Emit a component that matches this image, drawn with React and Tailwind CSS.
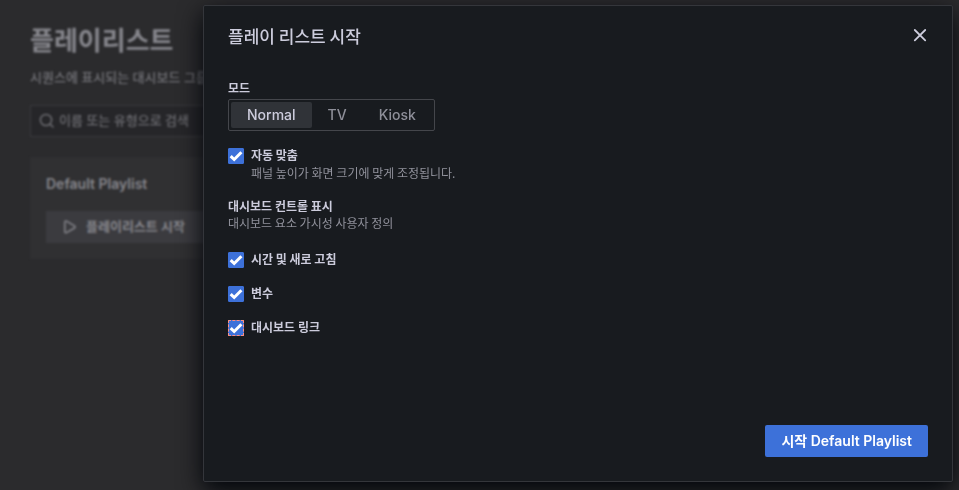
import { useState } from "react";

const modes = ["Normal", "TV", "Kiosk"];

function SearchIcon() {
  return (
    <svg className="size-4 shrink-0" viewBox="0 0 16 16" fill="none" stroke="currentColor" strokeWidth="1.5" strokeLinecap="round" aria-hidden="true">
      <circle cx="7" cy="7" r="5.6" />
      <path d="M11.2 11.2 14 14" />
    </svg>
  );
}

function PlayIcon() {
  return (
    <svg className="size-4 shrink-0" viewBox="0 0 16 16" fill="none" stroke="currentColor" strokeWidth="1.5" strokeLinejoin="round" aria-hidden="true">
      <path d="M2.8 3.2c0-.9.9-1.4 1.7-1l8 4.7c.8.5.8 1.6 0 2.1l-8 4.7c-.8.4-1.7-.1-1.7-1z" />
    </svg>
  );
}

function CloseIcon() {
  return (
    <svg className="size-4" viewBox="0 0 16 16" fill="none" stroke="currentColor" strokeWidth="1.8" strokeLinecap="round" aria-hidden="true">
      <path d="M2.8 2 13.2 12.4M13.2 2 2.8 12.4" />
    </svg>
  );
}

function Option({ id, label, description, focused }) {
  return (
    <div className="flex gap-[7px]">
      <span className="mt-px grid size-4 shrink-0">
        <input
          id={id}
          type="checkbox"
          defaultChecked
          className={
            "peer col-start-1 row-start-1 size-4 appearance-none rounded-[1px] border border-[#3e4045] checked:border-[#3d71d9] checked:bg-[#3d71d9] " +
            (focused ? "outline-1 outline-dashed -outline-offset-1 outline-[#ff8f80]" : "outline-none")
          }
        />
        <svg className="pointer-events-none col-start-1 row-start-1 size-4 opacity-0 peer-checked:opacity-100" viewBox="0 0 16 16" fill="none" stroke="#fff" strokeWidth="3" aria-hidden="true">
          <path d="M2.7 8.1 6.2 11.5 13.4 4.2" />
        </svg>
      </span>
      <div className="flex flex-col gap-0.5">
        <label htmlFor={id} className="text-xs font-semibold">{label}</label>
        {description && <p className="text-xs text-[#91929c]">{description}</p>}
      </div>
    </div>
  );
}

function PlaylistPage() {
  return (
    <main className="flex flex-col px-[30px] pt-[23px] font-['Inter','Noto_Sans_CJK_KR',sans-serif] text-[#86868c] blur-[0.8px]" aria-hidden="true">
      <h1 className="text-[26px] leading-9 font-semibold">플레이리스트</h1>
      <p className="mt-2 text-[13px] leading-5 font-medium whitespace-nowrap text-[#737378]">시퀀스에 표시되는 대시보드 그룹</p>
      <div className="mt-[18px] flex h-8 items-center gap-1 border border-[#3a3a3d] bg-[#262629] px-2 text-[#6d6d72]">
        <SearchIcon />
        <input
          type="text"
          tabIndex={-1}
          aria-label="검색"
          placeholder="이름 또는 유형으로 검색"
          className="w-full bg-transparent text-[13px] font-medium outline-none placeholder:text-[#6d6d72]"
        />
      </div>
      <section className="mt-5 flex flex-col items-start gap-4 bg-[#303032] p-4">
        <h2 className="text-sm leading-[22px] font-semibold">Default Playlist</h2>
        <button type="button" tabIndex={-1} className="flex h-8 w-full items-center gap-2 bg-[#3b3b3f] px-4 text-[13px] font-semibold">
          <PlayIcon />
          플레이리스트 시작
        </button>
      </section>
    </main>
  );
}

function StartModal() {
  const [mode, setMode] = useState("Normal");
  return (
    <div role="dialog" aria-modal="true" aria-labelledby="modal-title" className="flex w-full max-w-[750px] flex-col rounded-xs border border-[#34363b] bg-[#181b1f] text-[#ccccdc] shadow-[0_8px_24px_rgb(1,4,9)]">
      <header className="flex h-[60px] items-center justify-between px-6">
        <h2 id="modal-title" className="text-[17px] leading-6 font-medium">플레이 리스트 시작</h2>
        <button type="button" aria-label="닫기"><CloseIcon /></button>
      </header>
      <div className="flex flex-1 flex-col items-start px-6 pt-3.5">
        <fieldset>
          <legend className="mb-[3px] text-xs font-semibold">모드</legend>
          <div className="flex h-8 rounded-xs border border-[#44464b] p-0.5 font-['Inter',sans-serif] text-sm font-medium">
            {modes.map((m) => (
              <label key={m} className="flex cursor-pointer items-center rounded-xs px-4 text-[#8e8f99] has-checked:bg-[#303338] has-checked:text-[#ccccdc]">
                <input type="radio" name="mode" checked={mode === m} onChange={() => setMode(m)} className="sr-only" />
                {m}
              </label>
            ))}
          </div>
        </fieldset>
        <div className="mt-4">
          <Option id="autofit" label="자동 맞춤" description="패널 높이가 화면 크기에 맞게 조정됩니다." />
        </div>
        <fieldset className="mt-[17px]">
          <legend className="text-xs font-semibold">대시보드 컨트롤 표시</legend>
          <p className="mt-px text-xs text-[#91929c]">대시보드 요소 가시성 사용자 정의</p>
          <div className="mt-5 flex flex-col gap-[17px]">
            <Option id="time" label="시간 및 새로 고침" />
            <Option id="variables" label="변수" />
            <Option id="links" label="대시보드 링크" focused />
          </div>
        </fieldset>
      </div>
      <footer className="flex justify-end p-6">
        <button type="button" className="h-8 rounded-xs bg-[#3d71d9] px-4 font-['Inter','Noto_Sans_CJK_KR',sans-serif] text-sm font-semibold text-white">시작 Default Playlist</button>
      </footer>
    </div>
  );
}

export default function App() {
  return (
    <div className="relative h-screen overflow-hidden bg-[#2b2b2d] font-['Noto_Sans_CJK_KR',sans-serif]">
      <PlaylistPage />
      <div className="absolute inset-0 flex justify-end pt-[5px] pr-1.5 pb-2">
        <StartModal />
      </div>
    </div>
  );
}
